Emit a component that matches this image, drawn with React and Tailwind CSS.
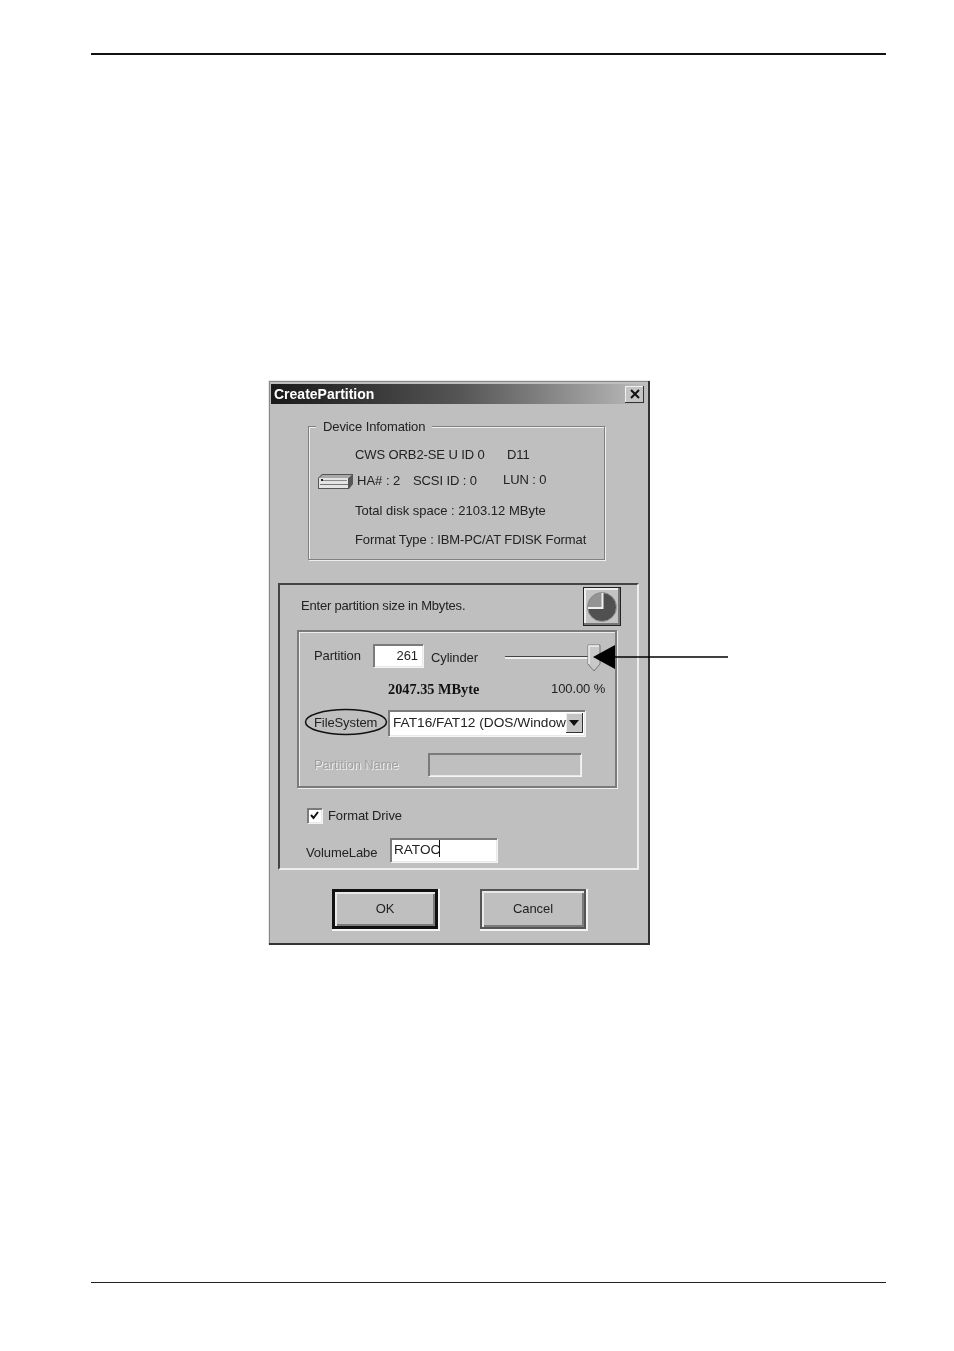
const sunken = 'shadow-[inset_2px_2px_0_#7b7b7b,inset_-1px_-1px_0_#e8e8e8,1px_1px_0_#f4f4f4]';

function DiskIcon() {
  return (
    <svg width="37" height="18" viewBox="0 0 37 18" className="shrink-0">
      <path d="M1 6 L5 2 L36 2 L36 12 L32 17 L1 17 Z" fill="#555" />
      <path d="M2 6 L5.5 3 L35 3 L31.5 6 Z" fill="#a8a8a8" />
      <rect x="2" y="6" width="29" height="10" fill="#e4e4e4" />
      <rect x="5" y="8" width="25" height="1" fill="#8a8a8a" />
      <rect x="3" y="12" width="28" height="1" fill="#777" />
      <rect x="4" y="7" width="2" height="2" fill="#222" />
    </svg>
  );
}

function PieIcon() {
  return (
    <svg width="30" height="30" viewBox="0 0 30 30">
      <circle cx="15" cy="15" r="14.5" fill="#505050" stroke="#9a9a9a" strokeWidth="1" />
      <path d="M15 1 A14 14 0 0 0 1 15 L15 15 Z" fill="#949494" />
      <path d="M15.5 1 L15.5 16 L1 16" fill="none" stroke="#f0f0f0" strokeWidth="2" />
    </svg>
  );
}

function DialogButton({ label, isDefault }) {
  return (
    <div
      className={`w-[106px] h-[40px] flex items-center justify-center shadow-[inset_1px_1px_0_1px_#e8e8e8,inset_-1px_-1px_0_1px_#7b7b7b,1px_1px_0_1px_#f4f4f4] ${
        isDefault ? 'border-[3px] border-[#111]' : 'border-2 border-[#555]'
      }`}
    >
      {label}
    </div>
  );
}

export default function App() {
  return (
    <div className="relative w-[954px] h-[1351px] bg-white overflow-hidden font-['Liberation_Sans',Arial,sans-serif] text-[13px] tracking-[-0.1px] leading-[20px] text-[#222]">
      <div className="mt-[53px] ml-[91px] w-[795px] h-[2px] bg-[#111]" />

      {/* Dialog window */}
      <div className="mt-[325px] ml-[268px] w-[382px] h-[565px] bg-[#bfbfbf] shadow-[inset_1px_1px_0_#e8e8e8,inset_-2px_-2px_0_#333,inset_2px_2px_0_#888] overflow-hidden blur-[0.4px]">
        {/* Title bar */}
        <div className="mt-[4px] mx-[3px] h-[20px] flex items-center justify-between pl-[3px] pr-[3px] bg-gradient-to-r from-[#1a1a1a] via-[#555] to-[#bdbdbd]">
          <span className="font-bold text-[14px] tracking-normal text-white">CreatePartition</span>
          <div className="w-[19px] h-[17px] bg-[#c4c4c4] flex items-center justify-center shadow-[inset_-1px_-1px_0_#333,inset_1px_1px_0_#f0f0f0]">
            <svg width="10" height="10" viewBox="0 0 10 10">
              <path d="M1 1 L9 9 M9 1 L1 9" stroke="#111" strokeWidth="2" />
            </svg>
          </div>
        </div>

        {/* Device info group */}
        <div className="relative mt-[22px] ml-[40px] w-[297px] h-[134px] border border-[#808080] shadow-[1px_1px_0_#eee,inset_1px_1px_0_#eee]">
          <span className="absolute -top-[10px] left-[7px] px-[7px] bg-[#bfbfbf]">Device Infomation</span>
          <div className="pt-[18px] pl-[46px] h-[38px] flex items-center whitespace-pre">
            <span className="w-[152px]">CWS ORB2-SE U ID 0</span>
            <span>D11</span>
          </div>
          <div className="mt-[6px] pl-[8px] h-[20px] flex items-center whitespace-pre">
            <DiskIcon />
            <span className="ml-[3px] w-[56px] tracking-normal">HA# : 2</span>
            <span className="w-[90px]">SCSI ID : 0</span>
            <span className="-mt-[2px]">LUN : 0</span>
          </div>
          <div className="mt-[10px] pl-[46px] tracking-normal">Total disk space : 2103.12 MByte</div>
          <div className="mt-[9px] pl-[46px]">Format Type : IBM-PC/AT FDISK Format</div>
        </div>

        {/* Partition group */}
        <div className="mt-[23px] ml-[10px] w-[361px] h-[287px] border-2 border-[#444] border-r-[#eee] border-b-[#eee] pt-[2px]">
          <div className="flex items-center justify-between pl-[21px] pr-[16px]">
            <span className="-mt-[2px] tracking-[-0.2px]">Enter partition size in Mbytes.</span>
            <div className="w-[38px] h-[39px] flex items-center justify-center bg-[#c4c4c4] border border-[#222] shadow-[inset_-2px_-2px_0_#777,inset_2px_2px_0_#eee]">
              <PieIcon />
            </div>
          </div>

          <div className="mt-[4px] ml-[17px] w-[320px] h-[158px] border-2 border-[#7b7b7b] shadow-[1px_1px_0_#eee,inset_1px_1px_0_#eee]">
            <div className="mt-[12px] h-[23px] flex items-center">
              <span className="ml-[15px] w-[59px]">Partition</span>
              <div className={`w-[50px] h-[23px] bg-white text-right pr-[5px] pt-[2px] ${sunken}`}>261</div>
              <span className="ml-[8px] w-[74px] mt-[4px]">Cylinder</span>
              <div className="relative mt-[4px] w-[92px] h-[3px] bg-[#eee] border-t border-[#444]">
                <div className="absolute -top-[13px] left-[82px] w-[14px] h-[28px]">
                  <svg width="14" height="28" viewBox="0 0 14 28">
                    <path d="M1 1 L13 1 L13 20 L7 27 L1 20 Z" fill="#c8c8c8" stroke="#777" strokeWidth="1" />
                    <path d="M2 20 L2 2 L12 2" fill="none" stroke="#f0f0f0" strokeWidth="1.5" />
                  </svg>
                </div>
              </div>
            </div>

            <div className="mt-[12px] h-[20px] flex items-center">
              <span className="ml-[89px] w-[163px] font-['Liberation_Serif',serif] font-bold text-[14.3px] tracking-normal text-[#111]">2047.35 MByte</span>
              <span>100.00 %</span>
            </div>

            <div className="relative mt-[11px] h-[26px] flex items-center">
              <span className="ml-[15px] w-[74px]">FileSystem</span>
              <div className={`w-[197px] h-[26px] bg-white flex items-center justify-between pl-[5px] pr-[2px] ${sunken}`}>
                <span className="whitespace-nowrap text-[13.7px] tracking-normal">FAT16/FAT12 (DOS/Window</span>
                <div className="w-[18px] h-[20px] bg-[#c4c4c4] flex items-center justify-center shadow-[inset_-1px_-1px_0_#333,inset_1px_1px_0_#eee]">
                  <svg width="10" height="6" viewBox="0 0 10 6"><path d="M0 0 L10 0 L5 6 Z" fill="#111" /></svg>
                </div>
              </div>
              <svg width="84" height="28" viewBox="0 0 84 28" className="absolute left-[5px] -top-[2px]">
                <ellipse cx="42" cy="14" rx="40.5" ry="12.5" fill="none" stroke="#111" strokeWidth="1.5" />
              </svg>
            </div>

            <div className="mt-[17px] h-[23px] flex items-center">
              <span className="ml-[15px] w-[114px] text-[#a0a0a0] [text-shadow:1px_1px_0_#eee]">Partition Name</span>
              <div className={`w-[153px] h-[23px] bg-[#bfbfbf] ${sunken}`} />
            </div>
          </div>

          <div className="mt-[18px] ml-[27px] h-[18px] flex items-center">
            <div className={`w-[15px] h-[15px] bg-white flex items-center justify-center ${sunken}`}>
              <svg width="11" height="11" viewBox="0 0 11 11"><path d="M2 5 L4.5 8 L9 2" fill="none" stroke="#111" strokeWidth="2" /></svg>
            </div>
            <span className="ml-[6px] mt-[2px]">Format Drive</span>
          </div>

          <div className="mt-[14px] ml-[26px] h-[24px] flex items-center">
            <span className="w-[84px] mt-[5px]">VolumeLabe</span>
            <div className={`w-[107px] h-[24px] bg-white pl-[4px] pt-[2px] flex text-[13.6px] tracking-normal ${sunken}`}>
              <span>RATOC</span>
              <span className="ml-[-1px] w-[1px] h-[17px] bg-[#111]" />
            </div>
          </div>
        </div>

        {/* Buttons */}
        <div className="mt-[19px] ml-[64px] flex gap-[42px]">
          <DialogButton label="OK" isDefault />
          <DialogButton label="Cancel" />
        </div>
      </div>

      <div className="mt-[337px] ml-[91px] w-[795px] h-[1px] bg-[#222]" />

      {/* Callout arrow */}
      <svg width="136" height="40" viewBox="0 0 136 40" className="absolute left-[592px] top-[637px]">
        <path d="M1 20 L23 8 L23 32 Z" fill="#000" />
        <path d="M22 20 L136 20" stroke="#000" strokeWidth="1.5" />
      </svg>
    </div>
  );
}
